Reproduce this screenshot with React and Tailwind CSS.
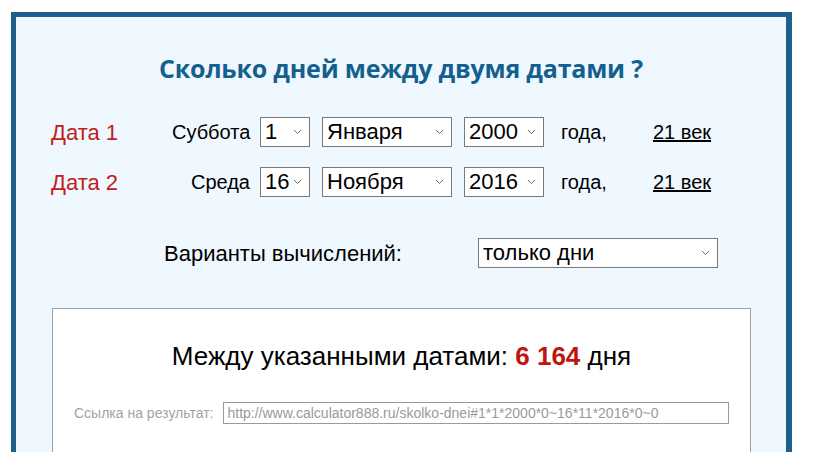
import React from "react";

function Chevron() {
  return (
    <svg className="pointer-events-none absolute right-[8px] top-1/2 -translate-y-1/2" width="9" height="6" viewBox="0 0 9 6" fill="none">
      <path d="M1 1l3.5 3.5L8 1" stroke="#6b6b6b" strokeWidth="1" />
    </svg>
  );
}

function Select({ value, options, w }) {
  return (
    <div className={"relative h-[30px] " + w}>
      <select
        defaultValue={value}
        className="h-full w-full appearance-none border border-[#7a7a7a] bg-white pl-[4px] text-[22px] leading-[28px] text-black outline-none"
      >
        {options.map((o) => (
          <option key={o}>{o}</option>
        ))}
      </select>
      <Chevron />
    </div>
  );
}

const days = Array.from({ length: 31 }, (_, i) => String(i + 1));
const months = ["Января", "Февраля", "Марта", "Апреля", "Мая", "Июня", "Июля", "Августа", "Сентября", "Октября", "Ноября", "Декабря"];
const years = Array.from({ length: 40 }, (_, i) => String(1990 + i));

function DateRow({ label, weekday, day, month, year }) {
  return (
    <div className="flex h-[30px] items-center pl-[35px]">
      <span className="w-[121px] text-[22px] text-[#c0201a]">{label}</span>
      <span className="mr-[10px] w-[78px] text-right text-[20px] whitespace-nowrap">{weekday}</span>
      <Select value={day} options={days} w="w-[50px]" />
      <div className="ml-[12px]">
        <Select value={month} options={months} w="w-[130px]" />
      </div>
      <div className="ml-[12px]">
        <Select value={year} options={years} w="w-[80px]" />
      </div>
      <span className="ml-[17px] w-[92px] text-[20px]">года,</span>
      <a href="#" className="text-[20px] text-black underline">21 век</a>
    </div>
  );
}

export default function App() {
  return (
    <div className="h-[452px] overflow-hidden bg-white pt-[12px] pl-[11px] font-['Liberation_Sans',Arial,sans-serif] text-black">
      <div className="h-[440px] w-[781px] overflow-hidden border-[5px] border-r-[6px] border-b-0 border-[#1e5f8b] bg-[#f0f8ff]">
        {/* заголовок */}
        <h1 className="pt-[36px] text-center font-['Open_Sans',sans-serif] text-[25px] leading-[30px] font-bold tracking-[-0.2px] text-[#13608f]">
          Сколько дней между двумя датами ?
        </h1>

        <div className="mt-[34px] flex flex-col gap-[20px]">
          <DateRow label="Дата 1" weekday="Суббота" day="1" month="Января" year="2000" />
          <DateRow label="Дата 2" weekday="Среда" day="16" month="Ноября" year="2016" />
        </div>

        <div className="mt-[41px] flex h-[30px] items-center">
          <span className="ml-[148px] w-[314px] text-[22px]">Варианты вычислений:</span>
          <Select value="только дни" options={["только дни", "дни, месяцы, годы"]} w="w-[240px]" />
        </div>

        {/* результат */}
        <div className="mt-[40px] ml-[36px] h-[160px] w-[699px] border border-[#a0a0a0] bg-white">
          <div className="pt-[31px] text-center text-[26px] leading-[32px]">
            Между указанными датами: <b className="text-[#c0150f]">6 164</b> дня
          </div>
          <div className="mt-[30px] flex items-center pl-[21px]">
            <span className="mr-[10px] text-[14px] text-[#a3a3a3]">Ссылка на результат:</span>
            <input
              readOnly
              value="http://www.calculator888.ru/skolko-dnei#1*1*2000*0~16*11*2016*0~0"
              className="h-[22px] w-[506px] border border-[#9a9a9a] bg-white px-[3px] text-[14px] text-[#9a9a9a] outline-none"
            />
          </div>
        </div>
      </div>
    </div>
  );
}
